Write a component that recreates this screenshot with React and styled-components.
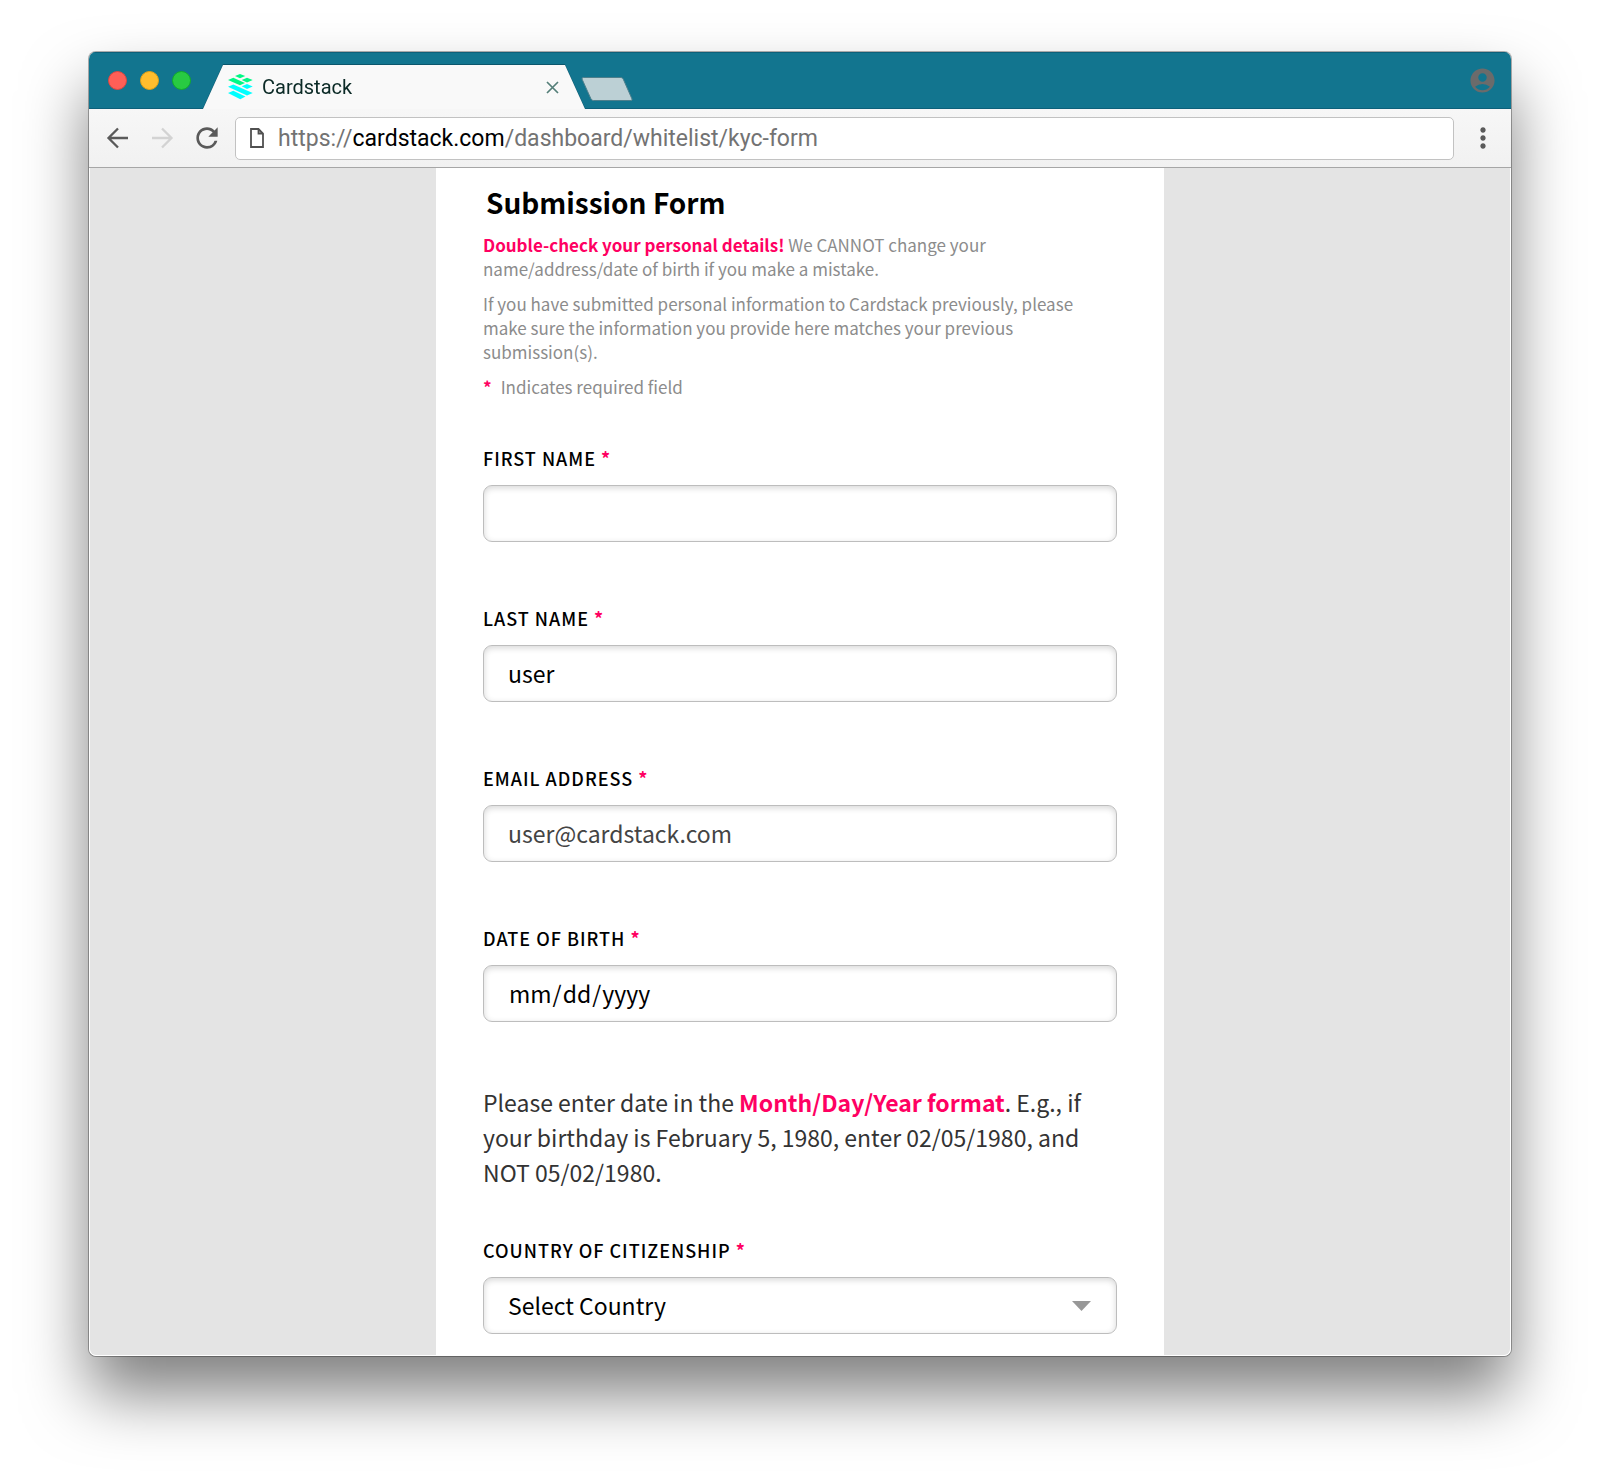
import React from "react";
import styled, { createGlobalStyle } from "styled-components";
import { MdAccountCircle, MdMoreVert, MdRefresh } from "react-icons/md";

const pink = "#ff0062";

const GlobalStyle = createGlobalStyle`
  * {
    box-sizing: border-box;
  }
  body {
    margin: 0;
    background: #fff;
    color: #000;
    font-family: "Noto Sans CJK SC", "Noto Sans", sans-serif;
  }
`;

const Page = styled.div`
  min-height: 100vh;
  padding: 52px 89px 126px;
`;

const BrowserWindow = styled.div`
  overflow: hidden;
  border-radius: 7px;
  box-shadow: 0 0 0 1px rgba(0, 0, 0, 0.3), 0 38px 64px rgba(0, 0, 0, 0.5);
`;

const TitleBar = styled.header`
  display: flex;
  align-items: center;
  height: 57px;
  padding: 0 14px 0 19px;
  background: #12758f;
  box-shadow: inset 0 1px 0 #0d607a, inset 0 -1px 0 #0d607a;
`;

const Lights = styled.div`
  display: flex;
  gap: 13px;
`;

const Light = styled.button`
  width: 19px;
  height: 19px;
  padding: 0;
  border: 1px solid ${props => props.$edge};
  border-radius: 50%;
  background: ${props => props.$color};
`;

const TabOutline = styled.div`
  align-self: flex-end;
  margin-left: 12px;
  filter: drop-shadow(0 -1px 0 #0b566c);
`;

const Tab = styled.div`
  display: flex;
  align-items: center;
  width: 382px;
  height: 44px;
  padding: 0 26px 0 25px;
  background: #f9f9f9;
  clip-path: polygon(20px 0, calc(100% - 20px) 0, 100% 100%, 0 100%);
`;

const TabTitle = styled.span`
  flex: 1;
  margin-left: 9px;
  color: #0b2a26;
  font-family: Roboto, sans-serif;
  font-size: 20px;
  line-height: 24px;
`;

const IconButton = styled.button`
  display: flex;
  align-items: center;
  justify-content: center;
  padding: 0;
  border: 0;
  background: none;
  color: ${props => props.$color || "#5a5a5a"};
`;

const NewTab = styled(IconButton)`
  align-self: flex-end;
  margin: 0 auto 8px -4px;
`;

const Toolbar = styled.div`
  display: flex;
  align-items: center;
  height: 59px;
  padding: 0 12px;
  background: linear-gradient(#f7f7f7, #f1f1f1);
  border-bottom: 1px solid #a6a6a6;
`;

const NavButtons = styled.div`
  display: flex;
  gap: 13px;
`;

const AddressBar = styled.div`
  display: flex;
  flex: 1;
  align-items: center;
  height: 43px;
  margin: 0 13px 0 12px;
  padding: 0 14px;
  border: 1px solid #c2c2c2;
  border-radius: 5px;
  background: #fff;
`;

const Address = styled.div`
  flex: 1;
  margin-left: 14px;
  padding-top: 2px;
  outline: none;
  color: #737373;
  font-family: Roboto, sans-serif;
  font-size: 23px;
  line-height: 28px;
`;

const Host = styled.span`
  color: #000;
`;

const Viewport = styled.main`
  background: #e4e4e4;
  border: 1px solid #fff;
  border-top: 0;
  border-radius: 0 0 7px 7px;
`;

const Panel = styled.form`
  max-width: 728px;
  margin: 0 auto;
  padding: 16px 47px 21px;
  background: #fff;
`;

const Title = styled.h1`
  margin: 0 0 13px;
  padding-left: 3px;
  font-size: 28px;
  font-weight: 700;
  line-height: 36px;
`;

const Note = styled.p`
  margin: 0 0 11px;
  color: #8c8c8c;
  font-size: 17px;
  line-height: 24px;
`;

const Strong = styled.strong`
  color: ${pink};
  font-weight: 700;
`;

const Star = styled(Strong)`
  margin-right: ${props => (props.$lead ? "9px" : "0")};
`;

const Fields = styled.div`
  display: grid;
  gap: 64px;
  margin-top: 47px;
`;

const Field = styled.div`
  display: flex;
  flex-direction: column;
  gap: 15px;
`;

const Label = styled.label`
  font-size: 18px;
  font-weight: 500;
  letter-spacing: 1px;
  line-height: 24px;
  text-transform: uppercase;
`;

const Input = styled.input`
  width: 100%;
  height: 57px;
  padding: 0 24px 2px;
  border: 1px solid #bdbdbd;
  border-radius: 9px;
  outline: none;
  background: #fff;
  box-shadow: inset 0 2px 6px rgba(0, 0, 0, 0.16);
  color: ${props => (props.readOnly ? "#444" : "#000")};
  font-family: inherit;
  font-size: 23px;
  appearance: none;

  &::-webkit-calendar-picker-indicator {
    display: none;
  }
`;

const Help = styled.p`
  margin: 63px 0 48px;
  color: #333;
  font-size: 23px;
  line-height: 35px;
`;

const SelectBox = styled.div`
  display: grid;
  align-items: center;

  & > * {
    grid-area: 1 / 1;
  }

  svg {
    justify-self: end;
    margin-right: 26px;
    pointer-events: none;
  }
`;

function CardstackLogo() {
  return (
    <svg width="25" height="26" viewBox="0 0 25 26">
      <g fill="#00f986">
        <path d="M12 0l5.300 2-5.300 2.300L7 2z" />
        <path d="M0 6l5.300-2.300L17 9l-5 2.200z" />
        <path d="M13.700 6L19 3.700 24.700 6 19 8.500z" />
      </g>
      <g fill="#00ffff">
        <path d="M0 12.700l5.300-2.200L24.700 19 19 21.500z" />
        <path d="M13.700 12.300L19 10l5.700 2.500L19 15z" />
        <path d="M0 19l5.300-2.200 12.200 5.700-5.200 2.700z" />
      </g>
    </svg>
  );
}

function Arrow({ forward }) {
  return (
    <svg width="32" height="32" viewBox="0 0 32 32" fill="none" stroke="currentColor" strokeWidth="2.3">
      {forward ? <path d="M6 16h19M16 6.500l9.500 9.500-9.500 9.500" /> : <path d="M27 16H8M17 6.500L7.500 16l9.500 9.500" />}
    </svg>
  );
}

function TextField({ id, label, ...rest }) {
  return (
    <Field>
      <Label htmlFor={id}>
        {label} <Star>*</Star>
      </Label>
      <Input id={id} {...rest} />
    </Field>
  );
}

function BrowserChrome() {
  return (
    <>
      <TitleBar>
        <Lights>
          <Light aria-label="Close window" $color="#ff5f57" $edge="#e2463f" />
          <Light aria-label="Minimize window" $color="#ffbd2e" $edge="#e1a116" />
          <Light aria-label="Zoom window" $color="#28ca42" $edge="#12ac28" />
        </Lights>
        <TabOutline>
          <Tab>
            <CardstackLogo />
            <TabTitle>Cardstack</TabTitle>
            <IconButton aria-label="Close tab" $color="#557f79">
              <svg width="13" height="13" viewBox="0 0 13 13" stroke="currentColor" strokeWidth="1.700">
                <path d="M1 1l11 11M12 1L1 12" />
              </svg>
            </IconButton>
          </Tab>
        </TabOutline>
        <NewTab aria-label="New tab">
          <svg width="52" height="24" viewBox="0 0 52 24">
            <path
              d="M2.500.5H40q1.500 0 2.200 1.500l8.800 20q.6 1.500-1 1.500H12.500q-1.800 0-2.500-1.500L1 2Q.5.5 2.500.5z"
              fill="#bcd0d5"
              stroke="#4d7f8c"
            />
          </svg>
        </NewTab>
        <IconButton aria-label="Profile" $color="#6b6b6b">
          <MdAccountCircle size={29} />
        </IconButton>
      </TitleBar>
      <Toolbar>
        <NavButtons>
          <IconButton aria-label="Back">
            <Arrow />
          </IconButton>
          <IconButton aria-label="Forward" $color="#d3d3d3">
            <Arrow forward />
          </IconButton>
          <IconButton aria-label="Reload">
            <MdRefresh size={32} />
          </IconButton>
        </NavButtons>
        <AddressBar>
          <svg width="14" height="20" viewBox="0 0 14 20" fill="none" stroke="#505050" strokeWidth="1.800">
            <path d="M1 1h7.500L13 5.500V19H1zM8.500 1v4.500H13" />
          </svg>
          <Address role="textbox" aria-label="Address" tabIndex={0}>
            https://<Host>cardstack.com</Host>/dashboard/whitelist/kyc-form
          </Address>
        </AddressBar>
        <IconButton aria-label="Menu">
          <MdMoreVert size={32} />
        </IconButton>
      </Toolbar>
    </>
  );
}

function App() {
  return (
    <Page>
      <GlobalStyle />
      <BrowserWindow>
        <BrowserChrome />
        <Viewport>
          <Panel>
            <Title>Submission Form</Title>
            <Note>
              <Strong>Double-check your personal details!</Strong> We CANNOT change your name/address/date of birth if
              you make a mistake.
            </Note>
            <Note>
              If you have submitted personal information to Cardstack previously, please make sure the information you
              provide here matches your previous submission(s).
            </Note>
            <Note>
              <Star $lead>*</Star>Indicates required field
            </Note>
            <Fields>
              <TextField id="first-name" label="First Name" type="text" />
              <TextField id="last-name" label="Last Name" type="text" defaultValue="user" />
              <TextField id="email" label="Email Address" type="email" value="user@cardstack.com" readOnly />
              <TextField id="birth" label="Date of Birth" type="date" />
            </Fields>
            <Help>
              Please enter date in the <Strong>Month/Day/Year format</Strong>. E.g., if your birthday is February 5,
              1980, enter 02/05/1980, and NOT 05/02/1980.
            </Help>
            <Field>
              <Label htmlFor="country">
                Country of Citizenship <Star>*</Star>
              </Label>
              <SelectBox>
                <Input as="select" id="country">
                  <option>Select Country</option>
                </Input>
                <svg width="19" height="10" viewBox="0 0 19 10">
                  <path d="M0 0h19l-9.500 10z" fill="#989898" />
                </svg>
              </SelectBox>
            </Field>
          </Panel>
        </Viewport>
      </BrowserWindow>
    </Page>
  );
}

export default App;
